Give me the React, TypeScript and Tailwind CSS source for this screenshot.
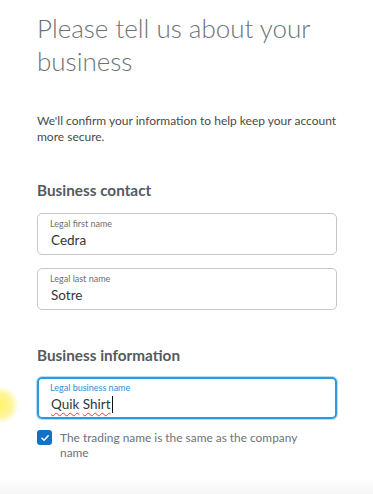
import React from "react";

function Field({ label, value, focused }: { label: string; value: React.ReactNode; focused?: boolean }) {
  return (
    <div
      className={
        focused
          ? "h-[42px] rounded-[5px] border-2 border-[#2b9ae0] shadow-[0_0_0_1px_#b9dcf3] px-[11px] pt-[3px]"
          : "h-[42px] rounded-[5px] border border-[#c6c6c6] px-[12px] pt-[4px]"
      }
    >
      <div className={"text-[9px] leading-[11px] " + (focused ? "text-[#2f8fd0]" : "text-[#6f6f6f]")}>{label}</div>
      <div className="text-[13.5px] leading-[20px] text-[#333638] mt-[1px] pl-[1px]">{value}</div>
    </div>
  );
}

export default function App() {
  return (
    <div
      className="relative w-[373px] h-[494px] overflow-hidden bg-white"
      style={{ fontFamily: 'Lato, "Open Sans", sans-serif' }}
    >
      <div className="absolute left-[-18px] top-[387px] w-[36px] h-[36px] rounded-full bg-[radial-gradient(circle,#fff46a_0%,#fff59a_45%,rgba(255,250,200,0)_75%)]" />
      <div className="pl-[37px] pr-[36px] pt-[12px]">
        <h1 className="text-[26px] leading-[33px] font-light text-[#6c7378]">
          Please tell us about your business
        </h1>
        <p className="mt-[35px] text-[12px] leading-[16px] text-[#4a4a4a]">
          We'll confirm your information to help keep your account more secure.
        </p>
        <h2 className="mt-[35px] text-[15.3px] leading-[20px] font-bold text-[#555a5e]">Business contact</h2>
        <div className="mt-[13px] flex flex-col gap-[13px]">
          <Field label="Legal first name" value="Cedra" />
          <Field label="Legal last name" value="Sotre" />
        </div>
        <h2 className="mt-[35px] text-[15.3px] leading-[20px] font-bold text-[#555a5e]">Business information</h2>
        <div className="mt-[12px]">
          <Field
            focused
            label="Legal business name"
            value={
              <span className="inline-flex items-center">
                <span className="underline decoration-wavy decoration-[#e0403c] decoration-[1px] underline-offset-[3px]">Quik</span>
                <span>&nbsp;</span>
                <span className="underline decoration-wavy decoration-[#e0403c] decoration-[1px] underline-offset-[3px]">Shirt</span>
                <span className="inline-block w-[1px] h-[17px] bg-[#111] ml-[1px]" />
              </span>
            }
          />
        </div>
        <div className="mt-[10px] flex items-start gap-[8px]">
          <div className="mt-[1px] w-[15px] h-[15px] shrink-0 rounded-[3px] bg-[#1072c6] flex items-center justify-center">
            <svg width="10" height="10" viewBox="0 0 10 10" fill="none">
              <path d="M2 5.2 L4.1 7.2 L8.2 2.8" stroke="white" strokeWidth="1.5" strokeLinecap="round" strokeLinejoin="round" />
            </svg>
          </div>
          <p className="mt-[1px] w-[250px] text-[11.9px] leading-[15px] text-[#6c7378]">
            The trading name is the same as the company name
          </p>
        </div>
      </div>
      <div className="absolute left-0 right-0 bottom-0 h-[16px] bg-gradient-to-b from-white to-[#f6f6f6]" />
    </div>
  );
}
